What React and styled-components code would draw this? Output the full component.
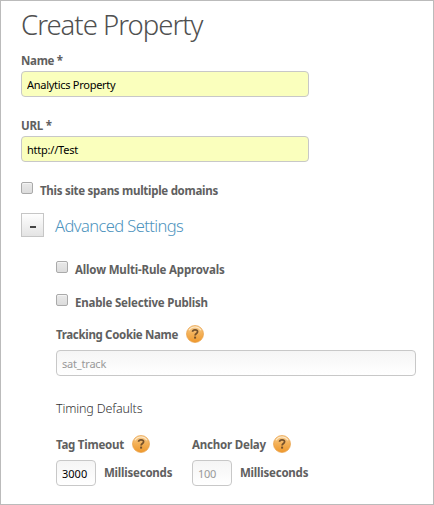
import React from "react";
import styled, { createGlobalStyle } from "styled-components";

const GlobalStyle = createGlobalStyle`
  * { box-sizing: border-box; }
  body { margin: 0; background: #fff; }
  input, button { font-family: inherit; margin: 0; }
`;

const Panel = styled.main`
  width: 434px;
  height: 505px;
  border: 1px solid #bbb;
  padding: 4px 0 0 20px;
  overflow: hidden;
  background: #fff;
  color: #606060;
  font-family: "Noto Sans", "Open Sans", sans-serif;
  font-size: 12px;
`;

const Title = styled.h1`
  margin: 0;
  height: 38px;
  line-height: 39px;
  font-size: 27.5px;
  font-weight: 300;
  letter-spacing: ${(p) => p.$track}px;
  color: #505050;
  white-space: nowrap;
`;

const Label = styled.label`
  display: block;
  height: 18px;
  line-height: 18px;
  font-size: 11.5px;
  font-weight: 700;
  letter-spacing: ${(p) => p.$track || 0}px;
  white-space: nowrap;
`;

const Field = styled.div`
  margin-top: ${(p) => p.$top}px;
`;

const TextInput = styled.input`
  display: block;
  width: ${(p) => p.$width}px;
  height: 26px;
  margin-top: ${(p) => p.$top || 0}px;
  padding: 0 5px;
  border: 1px solid #c8c8c8;
  border-radius: 4px;
  outline: 0;
  background: ${(p) => (p.$required ? "#faffbd" : "linear-gradient(#f5f5f5, #fff)")};
  color: #000;
  font-size: 11px;
  letter-spacing: ${(p) => p.$track || 0}px;
  &::placeholder { color: #999; opacity: 1; }
`;

const CheckRow = styled.div`
  display: flex;
  height: 18px;
  margin-top: ${(p) => p.$top}px;
  gap: 7px;
`;

const CheckBox = styled.input.attrs({ type: "checkbox" })`
  appearance: none;
  width: 12px;
  height: 12px;
  border: 1px solid #aaa;
  border-radius: 2px;
  background: linear-gradient(#e9e9e9, #dcdcdc);
  box-shadow: inset 0 1px #f4f4f4;
`;

const SectionHead = styled.div`
  display: flex;
  align-items: center;
  gap: 11px;
  height: 24px;
  margin-top: 13px;
`;

const Toggle = styled.button`
  display: flex;
  align-items: center;
  justify-content: center;
  width: 23px;
  height: 24px;
  padding: 0;
  border: 1px solid #c6c6c6;
  background: linear-gradient(#fefefe, #e4e4e4);
`;

const Minus = styled.span`
  width: 6px;
  height: 2px;
  margin-top: 3px;
  background: #444;
`;

const SectionTitle = styled.h2`
  margin: 2px 0 0;
  font-size: 16.5px;
  line-height: 24px;
  font-weight: 300;
  letter-spacing: ${(p) => p.$track}px;
  color: #4d93bd;
  white-space: nowrap;
`;

const Advanced = styled.section`
  padding-left: 35px;
`;

const LabelRow = styled.div`
  display: grid;
  grid-template-columns: ${(p) => p.$column}px 18px;
  align-items: center;
  height: 18px;
  ${Label} { line-height: 20px; }
`;

const SubTitle = styled.h3`
  margin: 23px 0 0;
  height: 20px;
  line-height: 20px;
  font-size: 12.5px;
  font-weight: 300;
  letter-spacing: ${(p) => p.$track}px;
  color: #333;
`;

const TimingGrid = styled.div`
  display: grid;
  grid-template-columns: 136px 136px;
  margin-top: 16px;
`;

const UnitRow = styled.div`
  display: flex;
  gap: 8px;
  margin-top: 7px;
`;

const UnitLabel = styled(Label)`
  margin-top: 4px;
`;

const HelpIcon = styled.svg`
  flex: none;
  display: block;
`;

function Help({ id }) {
  return (
    <HelpIcon width="18" height="18" viewBox="0 0 18 18" role="img" aria-label="Help">
      <defs>
        <linearGradient id={id} x2="0" y2="1">
          <stop offset="0" stopColor="#f6cf96" />
          <stop offset="0.45" stopColor="#f4b25a" />
          <stop offset="1" stopColor="#ee982c" />
        </linearGradient>
      </defs>
      <circle cx="9" cy="9" r="8.5" fill={`url(#${id})`} stroke="#e9a048" strokeWidth="0.7" />
      <path d="M3 5.2A7.2 7.2 0 0 1 15 5.2" fill="none" stroke="#fff0d8" strokeWidth="1.2" opacity="0.8" />
      <path d="M6.4 6.7C6.7 5.3 7.8 4.8 9 4.8c1.5 0 2.6.7 2.6 2 0 1.6-2.5 1.8-2.5 3.7" fill="none" stroke="#75512b" strokeWidth="1.7" />
      <rect x="8.1" y="11.6" width="2" height="2" fill="#75512b" />
    </HelpIcon>
  );
}

function Timing({ id, label, column, track, inputTrack, ...input }) {
  return (
    <div>
      <LabelRow $column={column}>
        <Label htmlFor={id} $track={track}>{label}</Label>
        <Help id={`${id}-help`} />
      </LabelRow>
      <UnitRow>
        <TextInput id={id} $width={40} $track={inputTrack} {...input} />
        <UnitLabel as="span" $track={-0.22}>Milliseconds</UnitLabel>
      </UnitRow>
    </div>
  );
}

export default function App() {
  return (
    <>
      <GlobalStyle />
      <Panel>
        <Title $track={-1}>Create Property</Title>
        <Field $top={9}>
          <Label htmlFor="name" $track={-0.3}>Name *</Label>
          <TextInput id="name" $top={1} $width={288} $track={-0.28} $required defaultValue="Analytics Property" />
        </Field>
        <Field $top={20}>
          <Label htmlFor="url" $track={-0.2}>URL *</Label>
          <TextInput id="url" $top={1} $width={288} $track={-0.22} $required defaultValue="http://Test" />
        </Field>
        <CheckRow $top={20}>
          <CheckBox id="domains" />
          <Label htmlFor="domains" $track={-0.28}>This site spans multiple domains</Label>
        </CheckRow>
        <SectionHead>
          <Toggle aria-label="Collapse"><Minus /></Toggle>
          <SectionTitle $track={-0.58}>Advanced Settings</SectionTitle>
        </SectionHead>
        <Advanced>
          <CheckRow $top={24}>
            <CheckBox id="approvals" />
            <Label htmlFor="approvals" $track={-0.16}>Allow Multi-Rule Approvals</Label>
          </CheckRow>
          <CheckRow $top={15}>
            <CheckBox id="publish" />
            <Label htmlFor="publish" $track={-0.2}>Enable Selective Publish</Label>
          </CheckRow>
          <Field $top={13}>
            <LabelRow $column={130}>
              <Label htmlFor="cookie" $track={-0.33}>Tracking Cookie Name</Label>
              <Help id="cookie-help" />
            </LabelRow>
            <TextInput id="cookie" $top={7} $width={360} $track={-0.2} placeholder="sat_track" />
          </Field>
          <SubTitle $track={-0.15}>Timing Defaults</SubTitle>
          <TimingGrid>
            <Timing id="tag" label="Tag Timeout" column={76} track={-0.25} defaultValue="3000" />
            <Timing id="anchor" label="Anchor Delay" column={81} track={-0.2} inputTrack={-0.3} placeholder="100" />
          </TimingGrid>
        </Advanced>
      </Panel>
    </>
  );
}
